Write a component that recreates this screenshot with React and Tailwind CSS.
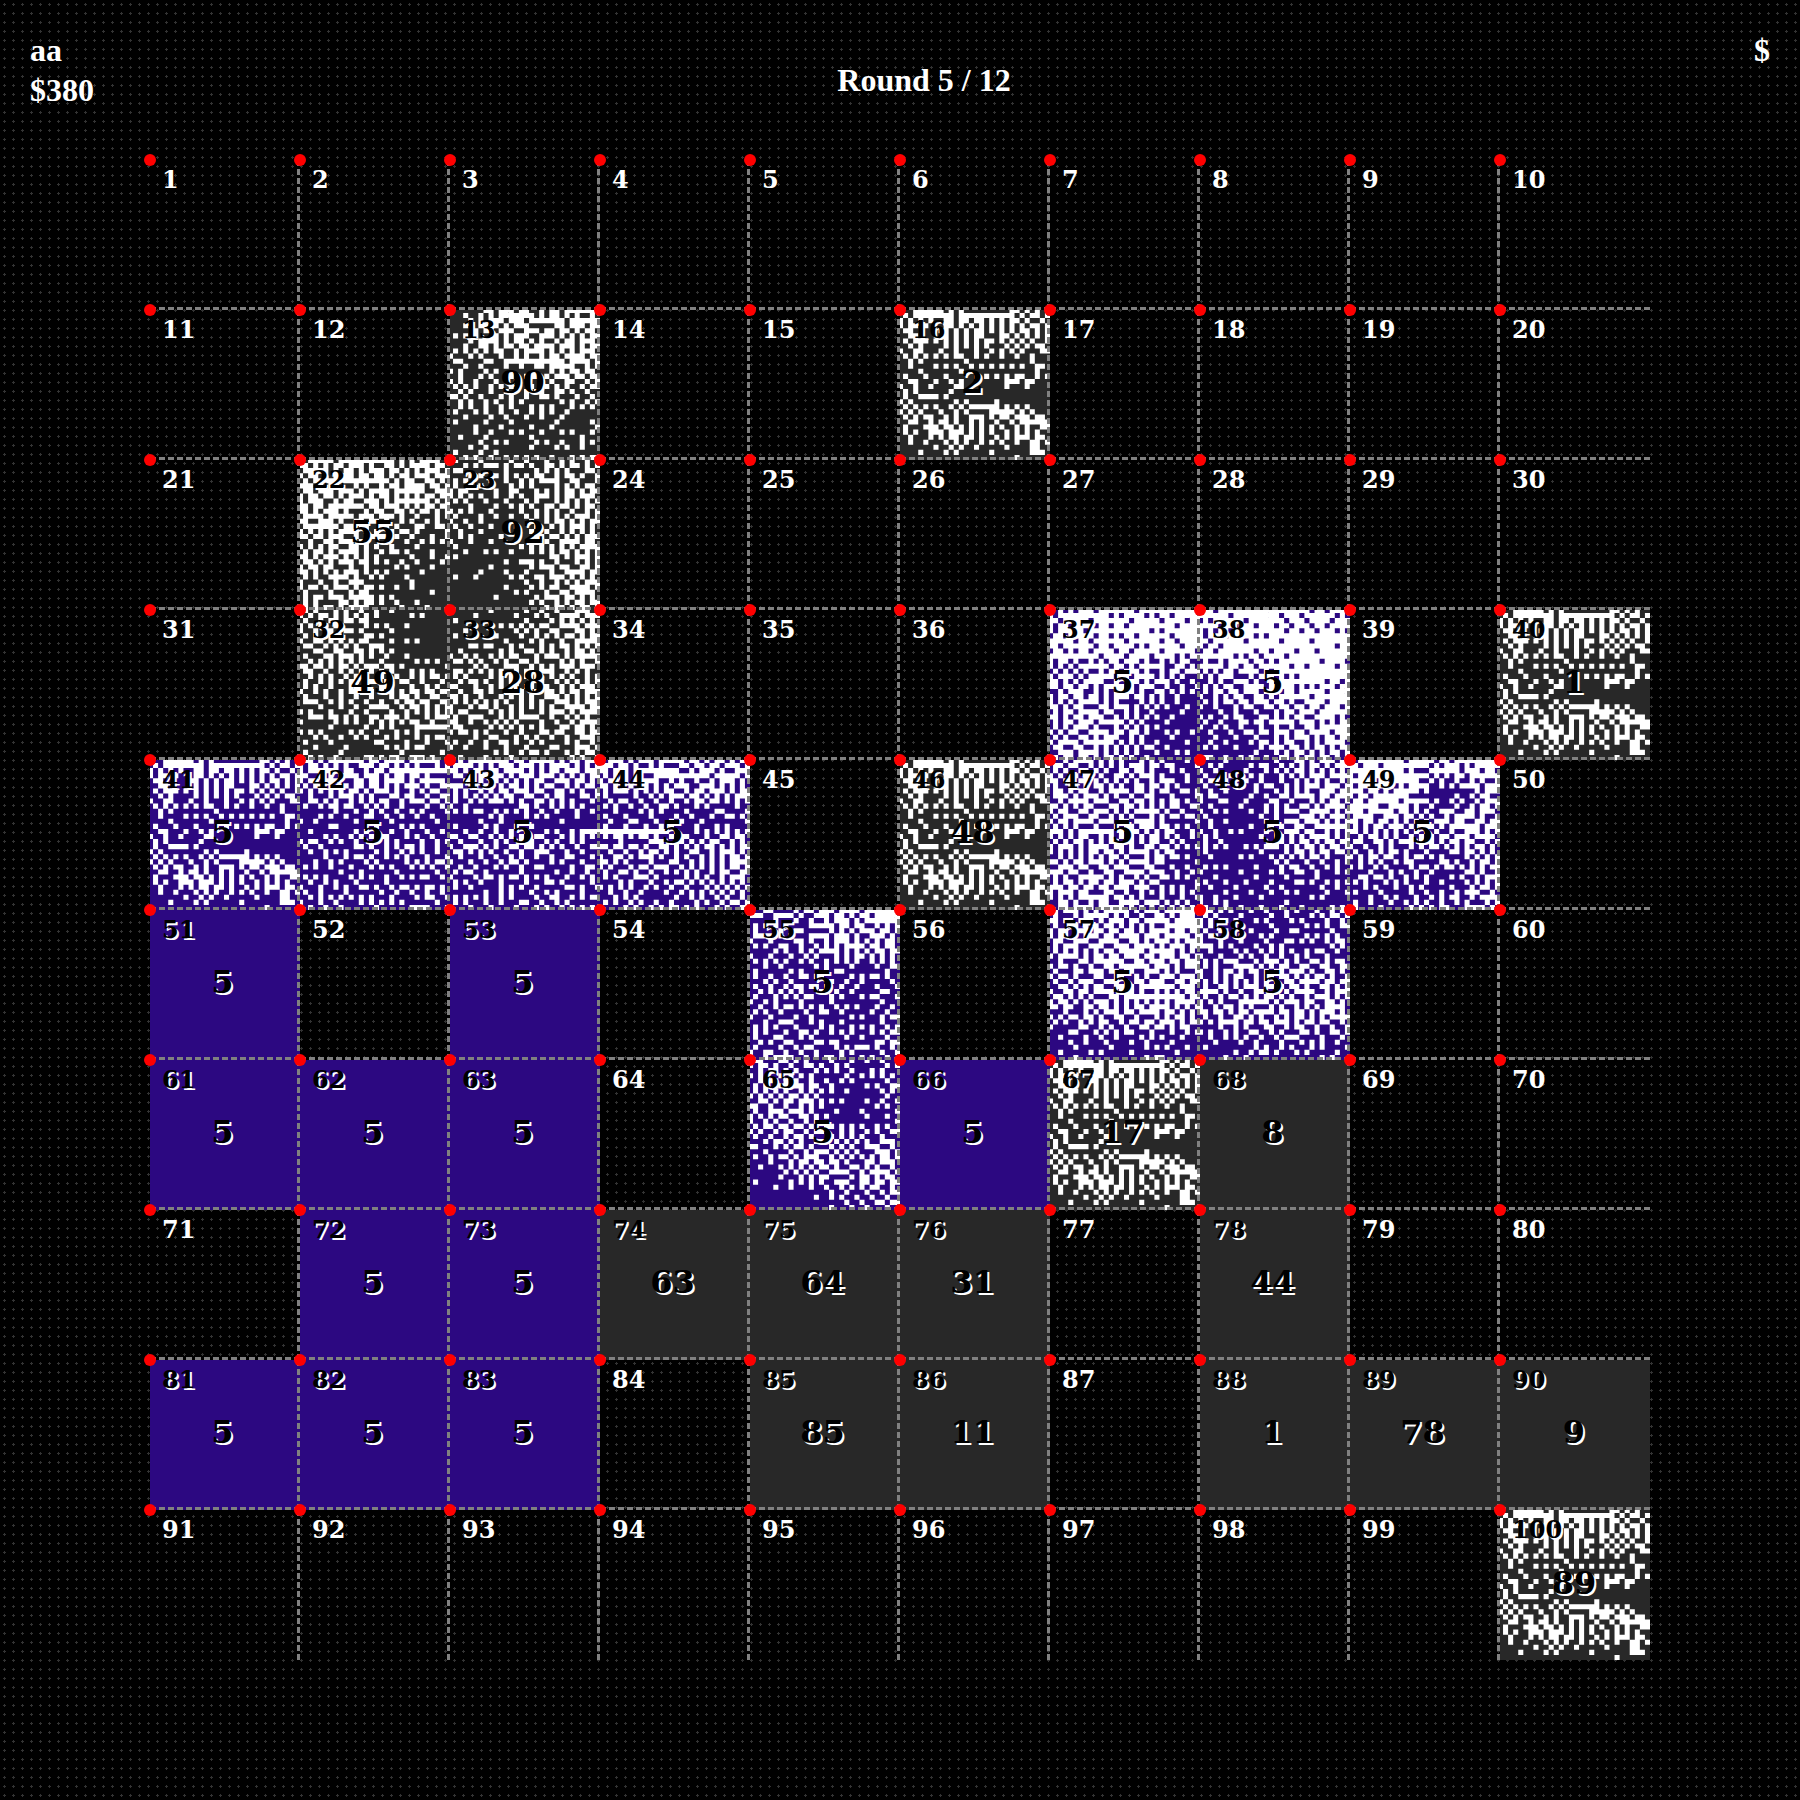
import React from "react";

const STREAM = [
  "3-8 10 12 22-23 25 27",
  "1 3-10 12-22 24 26-27 29",
  "0 2 4 6 9-10 12-13 15-16 18 20 22-23 25 28",
  "0 2-3 5 9-10 12 14 16 18 20 22 24 26-27 29",
  "1-2 8-9 11 13 15-16 18 20 22 24-25 27 29",
  "2-3 9 11 13 15-16 20-21 23 25 27 29",
  "1 3-5 7 9 11 13 15 17-18 20 22 24 26 29",
  "2 4 9 11 13 15 17 21 23 25 27-28",
  "0 3-4 8 11 15 18 20 22 24 28-29",
  "1 3 5 7 9 11-12 15 17 20 23 26",
  "2 4 13 26",
  "2 7 9 11 14 16 18 20 22 24 27-28",
  "4 12 27",
  "1 5 9 15 17 19 21 23-24 27 29",
  "2-3 7 10 12 21-23 25-26",
  "0 3 6 11-12 21 25",
  "1 3 10",
  "1 4-7 9",
  "0 2 11 13 19",
  "1 3 5 7 10 12 14-19 21 23 25",
  "0 2 4 8 11 13 18-22 24 26",
  "1 3 5-6 9 11 14-16 18 20-21 23-25 27-28",
  "2-3 6 8-9 11 14 16 19 22 24-29",
  "1 5-7 9-10 12 14 16 18 20 23 25 28-29",
  "1 3 6-8 10-12 14 16 18 21 23 25 27",
  "2 6 8 10-11 13-14 16 19 21 23-25 27-28",
  "2 5 9 11 13 16 18 20 23 26-27 29",
  "7 10 12 15 21 26-27",
  "4 9 11 18 26-28",
  "23",
];

// Brightness of each textured tile, sampled on a 6 x 6 grid from 0 (ink) to 9 (white).
const SHADES = {
  13: ["157567", "355656", "332376", "434444", "122222", "131223"],
  22: ["667666", "666776", "665544", "565332", "554221", "457210"],
  23: ["334444", "423456", "321355", "211366", "112455", "011356"],
  32: ["454210", "455310", "445433", "434455", "333445", "211333"],
  33: ["112346", "223356", "444455", "444456", "434446", "233335"],
  37: ["687878", "777777", "566655", "565542", "565421", "566421"],
  38: ["778777", "788888", "566788", "456778", "334667", "213656"],
  42: ["666666", "455555", "122222", "334443", "323333", "333333"],
  43: ["666666", "445555", "122221", "445443", "333333", "333333"],
  44: ["666666", "445556", "222222", "445556", "444446", "333335"],
  47: ["554552", "565554", "565653", "556563", "556643", "566543"],
  48: ["313456", "423456", "312566", "322556", "212333", "322212"],
  49: ["787668", "777126", "665566", "454455", "344335", "223345"],
  55: ["434768", "344665", "223323", "344323", "333224", "344334"],
  57: ["566568", "556776", "456676", "555576", "345565", "121121"],
  58: ["523334", "422323", "456555", "556566", "455656", "113332"],
  65: ["444323", "455213", "454212", "355545", "135556", "001334"],
};

// Solid streaks that run over the dithered shading.
const STREAKS = {
  13: [[10, 11, 22], [11, 20, 23]],
  43: [[14, 26, 29]],
  44: [[14, 0, 13]],
};

const N = 30;

function parseRuns(rows) {
  let d = "";
  rows.forEach((row, y) => {
    row.split(" ").forEach((run) => {
      const [a, b = a] = run.split("-").map(Number);
      d += `M${a} ${y}h${b - a + 1}v1h${a - b - 1}z`;
    });
  });
  return d;
}

function noise(x, y, seed) {
  const s = Math.sin(x * 127.1 + y * 311.7 + seed * 74.7) * 43758.5453;
  return s - Math.floor(s) - 0.5;
}

function dither(rows, seed, streaks = []) {
  const at = (x, y) => Number(rows[y][x]) / 9;
  const g = [];
  for (let y = 0; y < N; y++) {
    g.push([]);
    for (let x = 0; x < N; x++) {
      const fx = Math.min(5, Math.max(0, (x + 0.5) / 5 - 0.5));
      const fy = Math.min(5, Math.max(0, (y + 0.5) / 5 - 0.5));
      const x0 = Math.min(4, Math.floor(fx));
      const y0 = Math.min(4, Math.floor(fy));
      const u = fx - x0;
      const v = fy - y0;
      g[y].push(
        (at(x0, y0) * (1 - u) + at(x0 + 1, y0) * u) * (1 - v) +
          (at(x0, y0 + 1) * (1 - u) + at(x0 + 1, y0 + 1) * u) * v +
          noise(x, y, seed) * 0.55,
      );
    }
  }
  let d = "";
  for (let y = 0; y < N; y++) {
    for (let x = 0; x < N; x++) {
      const inStreak = streaks.some(([sy, a, b]) => sy === y && x >= a && x <= b);
      const on = g[y][x] > 0.5;
      const err = g[y][x] - (on ? 1 : 0);
      const spread = [[1, 0, 7], [-1, 1, 3], [0, 1, 5], [1, 1, 1]];
      spread.forEach(([dx, dy, w]) => {
        if (g[y + dy] && g[y + dy][x + dx] !== undefined) g[y + dy][x + dx] += (err * w) / 16;
      });
      if (on || inStreak) d += `M${x} ${y}h1v1h-1z`;
    }
  }
  return d;
}

const STREAM_PATH = parseRuns(STREAM);
const PATHS = Object.fromEntries(
  Object.entries(SHADES).map(([id, rows]) => [id, dither(rows, Number(id), STREAKS[id])]),
);
[16, 40, 41, 46, 67, 100].forEach((id) => {
  PATHS[id] = STREAM_PATH;
});

const OWNED = [37, 38, 41, 42, 43, 44, 47, 48, 49, 51, 53, 55, 57, 58, 61, 62, 63, 65, 66, 72, 73, 81, 82, 83];
const PRICES = {
  13: 90, 16: 2, 22: 55, 23: 92, 32: 49, 33: 28, 40: 1, 46: 48, 67: 17, 68: 8,
  74: 63, 75: 64, 76: 31, 78: 44, 85: 85, 86: 11, 88: 1, 89: 78, 90: 9, 100: 89,
};

function Texture({ path }) {
  return (
    <svg
      className="absolute inset-0 size-full"
      viewBox="0.4 0.4 29.6 29.6"
      preserveAspectRatio="none"
      aria-hidden="true"
    >
      <path d={path} fill="#fff" />
    </svg>
  );
}

function Cell({ id }) {
  const owned = OWNED.includes(id);
  const value = owned ? 5 : PRICES[id];
  const filled = value !== undefined;
  const fill = owned ? "bg-[#2c0881]" : filled ? "bg-[#282828]" : "";
  const ink = filled ? "text-black [text-shadow:2px_2px_0_#fff]" : "text-white";
  const right = id % 10 !== 0 ? "border-r-3" : "";
  const bottom = id <= 90 ? "border-b-3" : "";
  return (
    <div className={`relative aspect-square ${fill}`}>
      {PATHS[id] && <Texture path={PATHS[id]} />}
      <div
        className={`relative grid size-full place-items-center border-dashed border-[#808080] pb-1 pr-0.5 ${right} ${bottom} ${ink}`}
      >
        <span className="absolute left-3 top-2 text-2xl leading-6">{id}</span>
        {filled && <span className="text-[32px] leading-8">{value}</span>}
      </div>
      <span className="absolute -left-1.5 -top-1.5 z-10 size-3 rounded-full bg-[#ff0000]" />
    </div>
  );
}

export default function App() {
  const ids = Array.from({ length: 100 }, (_, i) => i + 1);
  return (
    <div className="min-h-screen bg-black bg-[radial-gradient(circle,#333_1.2px,transparent_1.2px)] bg-[length:9px_9px] pb-[140px]">
      <header className="flex items-start justify-between px-[30px] pt-[30px] font-['Liberation_Serif',serif] text-[32px] font-bold leading-10 text-white">
        <div>
          <p>aa</p>
          <p>$380</p>
        </div>
        <h1 className="pt-[30px]">Round 5 / 12</h1>
        <p>$</p>
      </header>
      <main className="mx-auto mt-[50px] grid w-10/12 grid-cols-10 font-['DejaVu_Serif',serif] font-bold">
        {ids.map((id) => (
          <Cell key={id} id={id} />
        ))}
      </main>
    </div>
  );
}
